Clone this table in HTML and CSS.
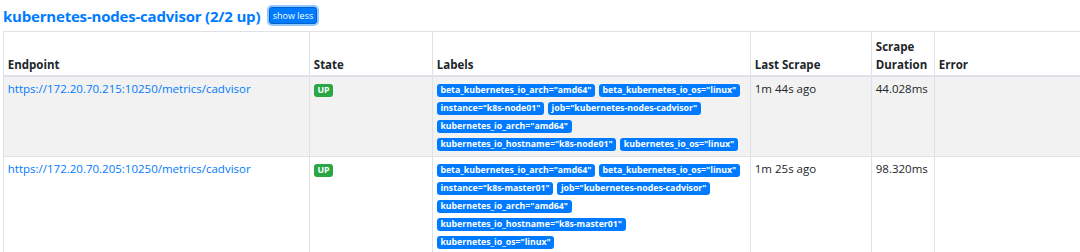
FILE: index.html
```html
<!DOCTYPE html>
<html>
<head>
<meta charset="utf-8">
<link rel="stylesheet" href="styles.css">
</head>
<body>
<div class="page">
  <div class="pool-head">
    <a class="pool-title" href="#">kubernetes-nodes-cadvisor (2/2 up)</a>
    <button class="btn-xs">show less</button>
  </div>
  <table class="targets">
    <colgroup>
      <col class="c-endpoint"><col class="c-state"><col class="c-labels"><col class="c-last"><col class="c-dur"><col class="c-err">
    </colgroup>
    <thead>
      <tr>
        <th>Endpoint</th><th>State</th><th>Labels</th><th>Last Scrape</th><th>Scrape Duration</th><th>Error</th>
      </tr>
    </thead>
    <tbody>
      <tr class="striped">
        <td><a class="ep" href="#">https://172.20.70.215:10250/metrics/cadvisor</a></td>
        <td><span class="badge up">UP</span></td>
        <td class="labels"><span class="badge lb">beta_kubernetes_io_arch="amd64"</span><span class="badge lb">beta_kubernetes_io_os="linux"</span><span class="badge lb">instance="k8s-node01"</span><span class="badge lb">job="kubernetes-nodes-cadvisor"</span><span class="badge lb">kubernetes_io_arch="amd64"</span><span class="badge lb">kubernetes_io_hostname="k8s-node01"</span><span class="badge lb">kubernetes_io_os="linux"</span></td>
        <td>1m 44s ago</td>
        <td>44.028ms</td>
        <td></td>
      </tr>
      <tr>
        <td><a class="ep" href="#">https://172.20.70.205:10250/metrics/cadvisor</a></td>
        <td><span class="badge up">UP</span></td>
        <td class="labels"><span class="badge lb">beta_kubernetes_io_arch="amd64"</span><span class="badge lb">beta_kubernetes_io_os="linux"</span><span class="badge lb">instance="k8s-master01"</span><span class="badge lb">job="kubernetes-nodes-cadvisor"</span><span class="badge lb">kubernetes_io_arch="amd64"</span><span class="badge lb">kubernetes_io_hostname="k8s-master01"</span><span class="badge lb">kubernetes_io_os="linux"</span></td>
        <td>1m 25s ago</td>
        <td>98.320ms</td>
        <td></td>
      </tr>
    </tbody>
  </table>
</div>
</body>
</html>
```
FILE: styles.css
```css
html, body {
  margin: 0;
  padding: 0;
  background: #fff;
  overflow: hidden;
}
body {
  font-family: "Open Sans", "Noto Sans", sans-serif;
  font-size: 11.5px;
  line-height: 18px;
  color: #212529;
}
.page {
  padding: 0 0 0 3px;
  width: 1120px;
}
.pool-head {
  display: flex;
  align-items: center;
  height: 31px;
  gap: 9px;
}
.pool-title {
  font-size: 15px;
  font-weight: 700;
  color: #007bff;
  text-decoration: none;
  letter-spacing: -0.2px;
}
.btn-xs {
  font-family: inherit;
  font-size: 9px;
  line-height: 13px;
  color: #fff;
  background: #007bff;
  border: 1px solid #0062cc;
  border-radius: 3px;
  padding: 1px 2.5px;
  box-shadow: 0 0 0 2px rgba(38, 143, 255, 0.5);
}
.targets {
  border-collapse: collapse;
  table-layout: fixed;
  width: 1117px;
  border: 1px solid #dee2e6;
}
.c-endpoint { width: 306px; }
.c-state { width: 123px; }
.c-labels { width: 318px; }
.c-last { width: 121px; }
.c-dur { width: 63px; }
.targets th, .targets td {
  border: 1px solid #dee2e6;
  padding: 3.8px;
  text-align: left;
}
.targets th {
  vertical-align: bottom;
  font-weight: 700;
  border-bottom: 2px solid #dee2e6;
  padding-top: 5.5px;
  padding-bottom: 1.3px;
}
.targets td {
  vertical-align: top;
  padding-top: 3.2px;
}
tr.striped td {
  background: #f2f2f2;
}
.ep {
  color: #007bff;
  text-decoration: none;
}
.badge {
  display: inline-block;
  font-size: 8.75px;
  font-weight: 700;
  line-height: 1;
  padding: 2px 3.6px;
  border-radius: 3px;
  color: #fff;
  white-space: nowrap;
  vertical-align: baseline;
}
.badge.up {
  background: #28a745;
}
.badge.lb {
  background: #007bff;
  margin-right: 4px;
}
```
